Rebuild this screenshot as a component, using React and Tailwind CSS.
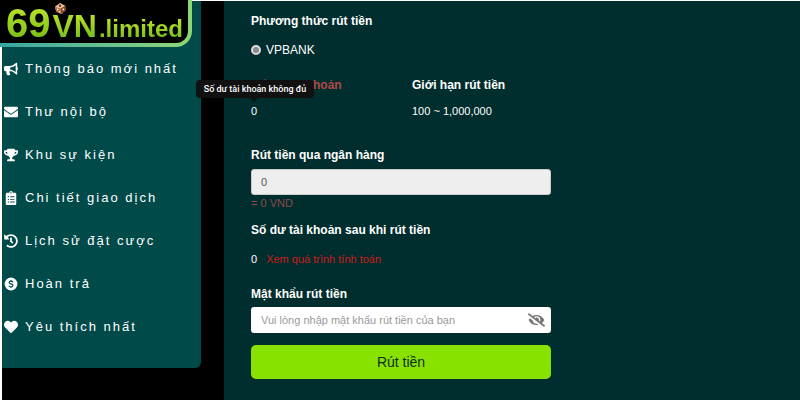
import {
    FaBullhorn,
    FaEnvelope,
    FaTrophy,
    FaClipboardList,
    FaHistory,
    FaHeart,
    FaEyeSlash,
} from "react-icons/fa";

function DollarCircle({ className }) {
    return (
        <svg viewBox="0 0 14 14" className={className} aria-hidden="true">
            <circle cx="7" cy="7" r="6.4" fill="currentColor" />
            <path
                d="M9 5.2 C8.6 4.3 7.9 4.1 7 4.1 C5.9 4.1 5.1 4.6 5.1 5.5 C5.1 7.4 9 6.4 9 8.4 C9 9.4 8.1 9.9 7 9.9 C5.9 9.9 5.2 9.5 4.9 8.6 M7 2.9 V4.1 M7 9.9 V11.1"
                fill="none"
                stroke="#004a4a"
                strokeWidth="1.1"
            />
        </svg>
    );
}

const menu = [
    { label: "Thông báo mới nhất", icon: FaBullhorn },
    { label: "Thư nội bộ", icon: FaEnvelope },
    { label: "Khu sự kiện", icon: FaTrophy },
    { label: "Chi tiết giao dịch", icon: FaClipboardList },
    { label: "Lịch sử đặt cược", icon: FaHistory },
    { label: "Hoàn trả", icon: DollarCircle },
    { label: "Yêu thích nhất", icon: FaHeart },
];

function Die() {
    return (
        <svg viewBox="0 0 14 14" className="absolute left-[54px] top-[2px] w-[13px] h-[13px]" aria-hidden="true">
            <path d="M6.5 1 L12 4 L12.5 9 L8 13 L2.5 10.5 L1 5 Z" fill="#e9c9a0" />
            <path d="M1 5 L7 7 L8 13 L2.5 10.5 Z" fill="#b46a35" />
            <path d="M7 7 L12 4 L12.5 9 L8 13 Z" fill="#8c4423" />
            <circle cx="6.5" cy="4" r="1.3" fill="#8a1f1f" />
            <circle cx="4" cy="8" r="0.9" fill="#fff" />
            <circle cx="6" cy="10.5" r="0.9" fill="#fff" />
            <circle cx="10" cy="8" r="0.9" fill="#fff" />
        </svg>
    );
}

function Logo() {
    return (
        <div className="absolute left-0 top-0 z-10 w-48 h-[47px] pr-1 pb-1 rounded-br-2xl bg-linear-to-r from-[#35a6a4] to-[#8dd873]">
            <a
                href="#"
                className="relative flex items-baseline gap-0.5 h-full pl-[6px] rounded-br-xl bg-black font-bold"
            >
                <span className="text-[40px] leading-[46px] bg-linear-to-b from-[#c8ea2c] to-[#68b814] bg-clip-text text-transparent">
                    69
                </span>
                <span className="text-[32px] leading-9 bg-linear-to-b from-[#c8ea2c] to-[#68b814] bg-clip-text text-transparent">
                    VN
                </span>
                <span className="text-[24px] leading-7 bg-linear-to-b from-[#c8ea2c] to-[#68b814] bg-clip-text text-transparent">
                    .limited
                </span>
                <Die />
            </a>
        </div>
    );
}

function Sidebar() {
    return (
        <nav className="w-[199px] shrink-0 self-start pt-[46px] pb-5 rounded-br-md bg-[#004a4a]">
            {menu.map(({ label, icon: Icon }) => (
                <a
                    key={label}
                    href="#"
                    className="flex items-center gap-[7px] h-[43px] pl-0.5 text-[13px] tracking-[2px] text-white whitespace-nowrap"
                >
                    <Icon className="w-[14px] h-[14px] shrink-0" />
                    {label}
                </a>
            ))}
        </nav>
    );
}

function Balance() {
    return (
        <div className="relative">
            <h2 className="text-[12px] leading-4 font-bold text-[#b04a47]">Số dư tài khoản</h2>
            <p className="mt-3 text-[11px] leading-3">0</p>
            <div
                role="tooltip"
                className="absolute -left-[55px] top-[3px] w-[118px] h-[18px] rounded-sm bg-[#111111] text-center font-['Roboto',sans-serif] text-[9px] leading-[18px] font-medium whitespace-nowrap"
            >
                Số dư tài khoản không đủ
                <span className="absolute left-[54px] top-full border-x-4 border-t-4 border-x-transparent border-t-[#111111]" />
            </div>
        </div>
    );
}

export default function App() {
    return (
        <div className="relative flex min-h-screen pl-0.5 pt-px bg-white font-['Liberation_Sans',sans-serif] text-white">
            <Logo />
            <div className="flex flex-1 bg-black">
                <Sidebar />
                <main className="flex-1 ml-[23px] pl-[27px] pt-3 bg-[#002d2d]">
                    <form className="w-[300px]" onSubmit={(e) => e.preventDefault()}>
                        {/* Payment method */}
                        <fieldset>
                            <legend className="text-[12px] leading-4 font-bold">Phương thức rút tiền</legend>
                            <label className="flex items-center gap-[5px] mt-[13px] text-[12px] leading-4">
                                <input
                                    type="radio"
                                    name="bank"
                                    defaultChecked
                                    className="appearance-none w-[10px] h-[10px] rounded-full border-2 border-[#dddddd] bg-[#8a8a8a]"
                                />
                                VPBANK
                            </label>
                        </fieldset>

                        {/* Balance and limits */}
                        <div className="grid grid-cols-[161px_1fr] mt-[19px]">
                            <Balance />
                            <div>
                                <h2 className="text-[12px] leading-4 font-bold">Giới hạn rút tiền</h2>
                                <p className="mt-3 text-[11px] leading-3">100 ~ 1,000,000</p>
                            </div>
                        </div>

                        <label htmlFor="amount" className="block mt-[30px] text-[12px] leading-4 font-bold">
                            Rút tiền qua ngân hàng
                        </label>
                        <input
                            id="amount"
                            defaultValue="0"
                            readOnly
                            className="block w-full h-[26px] mt-[6px] px-[9px] rounded-[3px] border border-[#cccccc] bg-[#eeeeee] text-[11px] text-[#555555]"
                        />
                        <p className="mt-0.5 text-[11px] leading-3 text-[#8d4a45]">= 0 VND</p>

                        <h2 className="mt-[13px] text-[12px] leading-4 font-bold">Số dư tài khoản sau khi rút tiền</h2>
                        <p className="flex gap-[9px] mt-[15px] text-[11px] leading-3">
                            0
                            <a href="#" className="text-[#cc1c1c]">Xem quá trình tính toán</a>
                        </p>

                        <label htmlFor="password" className="block mt-[21px] text-[12px] leading-4 font-bold">
                            Mật khẩu rút tiền
                        </label>
                        <div className="relative mt-[5px]">
                            <input
                                id="password"
                                type="password"
                                placeholder="Vui lòng nhập mật khẩu rút tiền của bạn"
                                className="block w-full h-[26px] pl-[10px] pr-8 rounded-[3px] bg-white text-[11px] text-[#555555] placeholder:text-[#999999]"
                            />
                            <button
                                type="button"
                                aria-label="Hiện mật khẩu"
                                className="absolute right-[6px] inset-y-0 flex items-center text-[#777777]"
                            >
                                <FaEyeSlash className="w-[17px] h-[14px]" />
                            </button>
                        </div>

                        <button className="block w-full h-[34px] mt-3 rounded-[5px] bg-[#88e200] text-sm text-[#0f2d14]">
                            Rút tiền
                        </button>
                    </form>
                </main>
            </div>
        </div>
    );
}
